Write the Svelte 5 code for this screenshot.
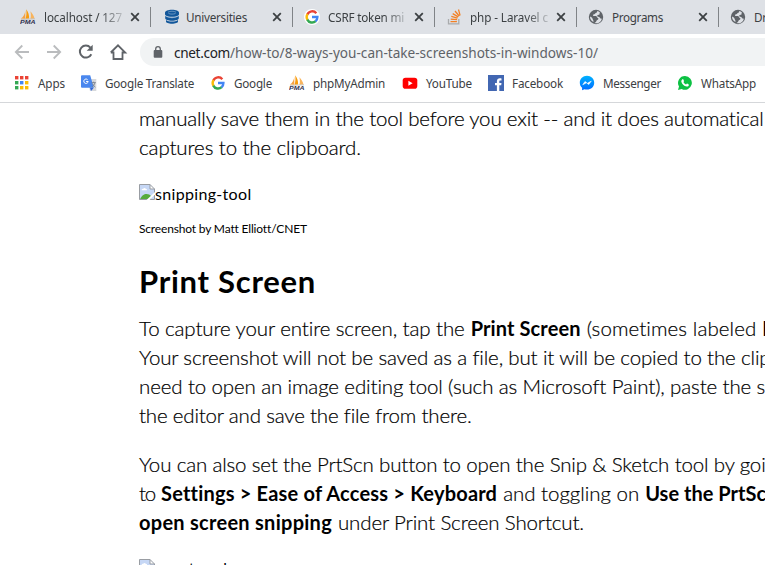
<script>
  const tabs = [
    { icon: 'pma', title: 'localhost / 127', width: 78, lead: 20, gap: 8, fade: true },
    { icon: 'db', title: 'Universities', width: 61, lead: 13, gap: 6 },
    { icon: 'google', title: 'CSRF token mi', width: 76, lead: 11, gap: 8, fade: true, chip: true },
    { icon: 'so', title: 'php - Laravel c', width: 78, lead: 11, gap: 8, fade: true },
    { icon: 'globe', title: 'Programs', width: 51, lead: 11, gap: 8 },
    { icon: 'globe', title: 'Dropbox', width: 46, lead: 11, gap: 8 }
  ];

  const bookmarks = [
    { icon: 'apps', title: 'Apps', x: 14, width: 27 },
    { icon: 'translate', title: 'Google Translate', x: 81, width: 89 },
    { icon: 'google', title: 'Google', x: 210, width: 38 },
    { icon: 'pma', title: 'phpMyAdmin', x: 289, width: 72 },
    { icon: 'youtube', title: 'YouTube', x: 402, width: 46 },
    { icon: 'facebook', title: 'Facebook', x: 488, width: 51 },
    { icon: 'messenger', title: 'Messenger', x: 579, width: 58 },
    { icon: 'whatsapp', title: 'WhatsApp', x: 677, width: 55 }
  ];

  const before = [
    [{ t: 'manually save them in the tool before you exit -- and it does automatical', w: 625 }],
    [{ t: 'captures to the clipboard.', w: 222 }]
  ];
  const capture = [
    [
      { t: 'To capture your entire screen, tap the', w: 326 },
      { t: 'Print Screen', w: 110, b: true },
      { t: '(sometimes labeled', w: 170 },
      { t: 'PrtScn', w: 64, b: true }
    ],
    [{ t: 'Your screenshot will not be saved as a file, but it will be copied to the clip', w: 631 }],
    [{ t: 'need to open an image editing tool (such as Microsoft Paint), paste the s', w: 626 }],
    [{ t: 'the editor and save the file from there.', w: 332 }]
  ];
  const settings = [
    [{ t: 'You can also set the PrtScn button to open the Snip & Sketch tool by goi', w: 626 }],
    [
      { t: 'to', w: 16 },
      { t: 'Settings > Ease of Access > Keyboard', w: 335.5, b: true },
      { t: 'and toggling on', w: 136 },
      { t: 'Use the PrtSc', w: 121, b: true }
    ],
    [
      { t: 'open screen snipping', w: 193, b: true },
      { t: 'under Print Screen Shortcut.', w: 246 }
    ]
  ];

  // Tracks a run of text so that it spans the given width.
  function fit(node, width) {
    const natural = node.getBoundingClientRect().width;
    const count = node.textContent.length;
    node.style.letterSpacing = `${(width - natural) / count}px`;
  }
</script>

{#snippet icon(name)}
  <svg class="ico" viewBox="0 0 16 16" width="16" height="16" aria-hidden="true">
    {#if name === 'pma'}
      <path d="M5.300 1.500C5 5 3.500 8 .8 9.600l4.500.2z" fill="#f6a243" />
      <path d="M6.200.3c2.200 3 3.100 6 2.900 9.300l-3.500.2C6.500 7 6.700 4 6.200.3z" fill="#f89c0e" />
      <path d="M10.300 2.200c2 1.800 3.400 4.300 4.200 7.200l-4 .3c.6-2.600.5-5-.2-7.500z" fill="#f8b45d" />
      <path d="M1 10.400l14-.6" stroke="#b9b4ae" stroke-width=".7" />
      <text x="0" y="15.400" textLength="15.500" lengthAdjust="spacingAndGlyphs" font-family="Liberation Sans" font-size="6.200" font-weight="700" font-style="italic" fill="#30304f">PMA</text>
    {:else if name === 'db'}
      <g fill="#12579b">
        <path d="M1 3.500C1 1.800 4.100.7 8 .7s7 1.100 7 2.800v1.700c0 1.500-3.100 2.600-7 2.600S1 6.700 1 5.200z" />
        <path d="M1.200 6.700C2.500 8 5 8.700 8 8.700s5.500-.7 6.800-2v2.500c0 1.400-3 2.500-6.800 2.500S1.200 10.600 1.200 9.200z" />
        <path d="M2 11c1.500 1 3.500 1.500 6 1.500s4.500-.5 6-1.500v1.600c0 1.300-2.700 2.200-6 2.200s-6-.9-6-2.200z" />
      </g>
      <path d="M4 3.200c2-1.300 6-1.300 8 0M4.500 4.500c2 .8 5 .8 7 0M1.500 7.300q6.500 3 13 0" fill="none" stroke="#9dbad7" stroke-width=".6" />
    {:else if name === 'google'}
      <g fill="none" stroke-width="2.400">
        <path d="M12.300 4.200A5.300 5.300 0 0 0 3.400 5.400" stroke="#ea4335" />
        <path d="M3.500 5.200a5.300 5.300 0 0 0 0 5.600" stroke="#fbbc05" />
        <path d="M3.300 10.600a5.300 5.300 0 0 0 8.400 1.500" stroke="#34a853" />
        <path d="M8 8h5.400c0 1.900-.6 3.300-1.900 4.300" stroke="#4285f4" />
      </g>
    {:else if name === 'so'}
      <path d="M2.500 10v4.800h10.300V10" fill="none" stroke="#a9abad" stroke-width="1.300" />
      <path d="M4.500 12.500h6.400M4.700 10.100l6.400.6M5.300 7.400l6.200 1.700M6.700 4.600l5.500 3.300M9 2l4.200 5M12.500.5l1.600 6" stroke="#f48024" stroke-width="1.250" />
    {:else if name === 'globe'}
      <circle cx="8" cy="8" r="7.200" fill="#5f6368" />
      <path d="M9.100 1.900c.3 1-.2 1.900-1.500 2.100-.5 1.300-1.900 1.200-2.600 1.700-.3 1 .5 1.500 1.600 1.400 1.800-.1 2.600.5 2.700 1.600 1.800.2 1.400 2-.4 2.400-.5 1.300-1.200 2.500-2.400 3A6 6 0 0 0 14 9.500c-.7.400-1.500.2-2-.4-.4-1-1.500-1.300-2.500-1.500-.8-1.100.2-2.200 1.700-1.900.7-.7 0-1.400.8-2.200a6 6 0 0 0-2.900-1.600zM2 7.500c1.300.5 2.700 1.400 2.600 2.600.2.900 1.300 1.300.8 2.900A6 6 0 0 1 2 7.500z" fill="#dee1e6" />
    {:else if name === 'apps'}
      {#each ['#ea4335', '#ea4335', '#ea4335', '#34a853', '#4285f4', '#fbbc05', '#34a853', '#fbbc05', '#fbbc05'] as color, i}
        <rect x={1 + (i % 3) * 5} y={1 + Math.floor(i / 3) * 5} width="3.400" height="3.400" fill={color} />
      {/each}
    {:else if name === 'translate'}
      <path d="M6 4h9.300v12H9z" fill="#d7d9dc" />
      <path d="M1 .3h8.200l3.600 12.400H1a1 1 0 0 1-1-1V1.300a1 1 0 0 1 1-1z" fill="#4a87ee" />
      <path d="M9 12.700h3.800L10 16z" fill="#3367d6" />
      <path d="M6.600 4.700A2.200 2.200 0 1 0 7.200 6.500H5.100" fill="none" stroke="#fff" stroke-width="1" />
      <path d="M10.600 7.600h4.200M12.600 6.700v.9M13.900 7.700c-.4 2-1.500 3.500-3 4.500M11.400 8.500c.7 1.600 1.700 2.800 3 3.700" fill="none" stroke="#737b85" stroke-width=".8" />
    {:else if name === 'youtube'}
      <rect x=".7" y="2.700" width="14.600" height="11" rx="2.800" fill="#f00" />
      <path d="M6.400 5.700l4.200 2.500-4.200 2.500z" fill="#fff" />
    {:else if name === 'facebook'}
      <rect width="16" height="16" fill="#4267b2" />
      <path d="M8.900 16v-5.700H7V8h1.900V6.300c0-2 1.200-3 3-3 .8 0 1.400.1 1.600.1v2.100h-1.100c-1 0-1.100.5-1.100 1.200V8h2.200l-.3 2.300h-1.900V16z" fill="#fff" />
    {:else if name === 'messenger'}
      <defs><linearGradient id="msg" x1="0" y1="0" x2="0" y2="1"><stop offset="0" stop-color="#00b2ff" /><stop offset="1" stop-color="#006aff" /></linearGradient></defs>
      <path d="M8 .8C3.900.8.800 3.800.800 7.700c0 2.100.9 3.900 2.300 5.100v2.500l2.300-1.100c.8.200 1.700.4 2.600.4 4.100 0 7.200-3 7.200-6.900S12.100.8 8 .8z" fill="url(#msg)" />
      <path d="M3.700 9.800L6 6.400l2.300 1.900 4-2.200-2.500 3.500-2.300-1.800z" fill="#fff" stroke="#fff" stroke-width=".5" />
    {:else if name === 'whatsapp'}
      <path d="M8 1a6.900 6.900 0 0 0-6 10.400L1 15l3.700-1A6.900 6.900 0 1 0 8 1z" fill="#0dc143" />
      <path d="M5.500 4.200c.5-.2.800 0 1 .5l.5 1.200c.1.500-.5.900-.6 1.200.6 1.200 1.400 1.900 2.600 2.400.4-.2.8-1 1.200-.9l1.500.8c.4.300 0 1.400-.6 1.800-1 .7-2.400.3-3.800-.5C5.700 9.600 4.500 8 4.300 6.600c0-1 .4-2 1.200-2.400z" fill="#fff" />
    {/if}
  </svg>
{/snippet}

{#snippet lines(rows)}
  <p>
    {#each rows as row}
      <span class="line">
        {#each row as run}
          <span class="run" class:bold={run.b} use:fit={run.w}>{run.t}</span>
        {/each}
      </span>
    {/each}
  </p>
{/snippet}

{#snippet broken()}
  <svg class="broken" width="16" height="16" viewBox="0 0 16 16" aria-hidden="true">
    <path d="M.5.500h10.500l4.500 4.500v10.500H.500z" fill="#c6d7f5" />
    <path d="M2.500 6.200q.2-1.700 1.700-1.500Q5.500 3.200 6.800 4.700 8.300 4.900 8 6.200z" fill="#fff" />
    <path d="M1 15.500c1.500-4 4-5.500 6.500-5.500 2 0 3.500.7 4.500 2v3.500z" fill="#55ab3c" />
    <path d="M11 .500V5h4.500z" fill="#fff" />
    <path d="M.500 15.500V.500H11L15.500 5v10.500zM11 .500V5h4.500" fill="none" stroke="#999da3" />
    <path d="M16 8v2.500L10.500 16H7.500z" fill="#fff" />
  </svg>
{/snippet}

<div class="window">
  <div class="tabs">
    {#each tabs as tab, i}
      <div class="tab" class:first={i === 0} style:padding-left="{tab.lead}px">
        <span class="favicon" class:chip={tab.chip}>{@render icon(tab.icon)}</span>
        <span class="title" class:fade={tab.fade} style:margin-left="{tab.gap}px">
          <span class="label" use:fit={tab.width}>{tab.title}</span>
        </span>
        <svg class="close" width="10" height="10" viewBox="0 0 10 10" aria-hidden="true">
          <path d="M1.200 1.200l7.600 7.600M8.800 1.200L1.200 8.800" stroke="#3c4043" stroke-width="1.800" />
        </svg>
      </div>
    {/each}
  </div>

  <div class="toolbar">
    <svg class="nav" width="128" height="32" viewBox="0 0 128 32" fill="none" aria-hidden="true">
      <path d="M29 16H16M22.300 9.500L15.800 16l6.500 6.500" stroke="#babcbe" stroke-width="1.800" />
      <path d="M47 16h13M53.700 9.500l6.500 6.500-6.500 6.500" stroke="#babcbe" stroke-width="1.800" />
      <path d="M91.300 18.200a6 6 0 1 1-.9-6.600" stroke="#5f6368" stroke-width="2" />
      <path d="M92.700 8.800v6h-6z" fill="#5f6368" />
      <path d="M113.500 15.500V23h9v-7.500M110.800 16.500l7.200-7.200 7.200 7.200h-2.700M110.800 16.500h2.700" stroke="#5f6368" stroke-width="1.800" />
    </svg>
    <div class="omnibox">
      <svg width="10" height="13" viewBox="0 0 10 13" aria-hidden="true">
        <rect x=".7" y="4" width="8.600" height="7.800" rx="1" fill="#5f6368" />
        <path d="M2.700 4.500V3a2.300 2.300 0 0 1 4.600 0v1.500" fill="none" stroke="#5f6368" stroke-width="1.300" />
      </svg>
      <span class="url"><span class="host" use:fit={56}>cnet.com</span><span class="path" use:fit={368}>/how-to/8-ways-you-can-take-screenshots-in-windows-10/</span></span>
    </div>
  </div>

  <div class="bookmarks">
    {#each bookmarks as mark, i}
      <div class="mark" style:width="{(bookmarks[i + 1]?.x ?? 765) - mark.x}px">
        {@render icon(mark.icon)}
        <span class="label" use:fit={mark.width}>{mark.title}</span>
      </div>
    {/each}
  </div>

  <article>
    {@render lines(before)}
    <div class="missing">{@render broken()}<span use:fit={96.5}>snipping-tool</span></div>
    <div class="credit"><span class="run" use:fit={167}>Screenshot by Matt Elliott/CNET</span></div>
    <h2><span class="run" use:fit={177}>Print Screen</span></h2>
    {@render lines(capture)}
    {@render lines(settings)}
    <div class="missing last">{@render broken()}<span use:fit={92}>ss-prtscn-key</span></div>
  </article>
</div>

<style>
  .window {
    width: 765px;
    height: 565px;
    overflow: hidden;
    background: #fff;
    font-family: 'Noto Sans', 'Open Sans', sans-serif;
    font-size: 11.7px;
    color: #3c4043;
  }
  svg { display: block; flex: none; }
  .tabs {
    display: flex;
    height: 34px;
    background: #dee1e6;
  }
  .tab {
    box-sizing: border-box;
    flex: none;
    display: flex;
    align-items: center;
    width: 142px;
    height: 34px;
    padding-right: 11px;
    background: linear-gradient(#808387, #808387) right 7px / 1px 20px no-repeat;
  }
  .tab.first { width: 151px; }
  .favicon { flex: none; display: flex; }
  .chip { border-radius: 50%; background: #fff; }
  .title {
    flex: 1;
    min-width: 0;
    overflow: hidden;
    white-space: nowrap;
  }
  .fade {
    -webkit-mask-image: linear-gradient(90deg, #000 65%, transparent 98%);
    mask-image: linear-gradient(90deg, #000 65%, transparent 98%);
  }
  .label { display: inline-block; white-space: nowrap; line-height: 16px; }
  .toolbar {
    display: flex;
    height: 36px;
    align-items: center;
  }
  .nav { margin-right: 12px; }
  .omnibox {
    flex: 1;
    display: flex;
    align-items: center;
    height: 28px;
    padding-left: 13px;
    border-radius: 14px 0 0 14px;
    background: #f1f3f4;
    font-size: 13.6px;
  }
  .url { display: flex; margin-left: 11px; white-space: nowrap; }
  .host { color: #202124; }
  .path { color: #5f6368; }
  .bookmarks {
    box-sizing: border-box;
    display: flex;
    height: 33px;
    padding: 0 0 6px 14px;
    align-items: center;
    border-bottom: 1px solid #d5d7da;
  }
  .mark { flex: none; display: flex; align-items: center; gap: 8px; }
  article {
    padding-left: 139px;
    padding-top: 1px;
    font-family: Lato, 'Open Sans', sans-serif;
    font-size: 20.5px;
    color: #000;
  }
  p { margin: 0 0 20px; font-weight: 300; -webkit-text-stroke: 0.2px #000; }
  p:first-child { margin-bottom: 22px; }
  .line { display: flex; gap: 6px; height: 29px; line-height: 29px; white-space: nowrap; }
  .run { flex: none; }
  .bold { font-size: 20px; font-weight: 700; -webkit-text-stroke: 0; }
  .missing { display: flex; height: 22px; font-size: 16px; line-height: 20px; }
  .missing.last { margin-top: 22px; line-height: 17px; }
  .credit { display: flex; height: 20px; margin-top: 13px; font-size: 12px; line-height: 20px; }
  h2 { display: flex; height: 40px; margin: 22px 0 13px; font-size: 31px; line-height: 40px; font-weight: 700; }
</style>
